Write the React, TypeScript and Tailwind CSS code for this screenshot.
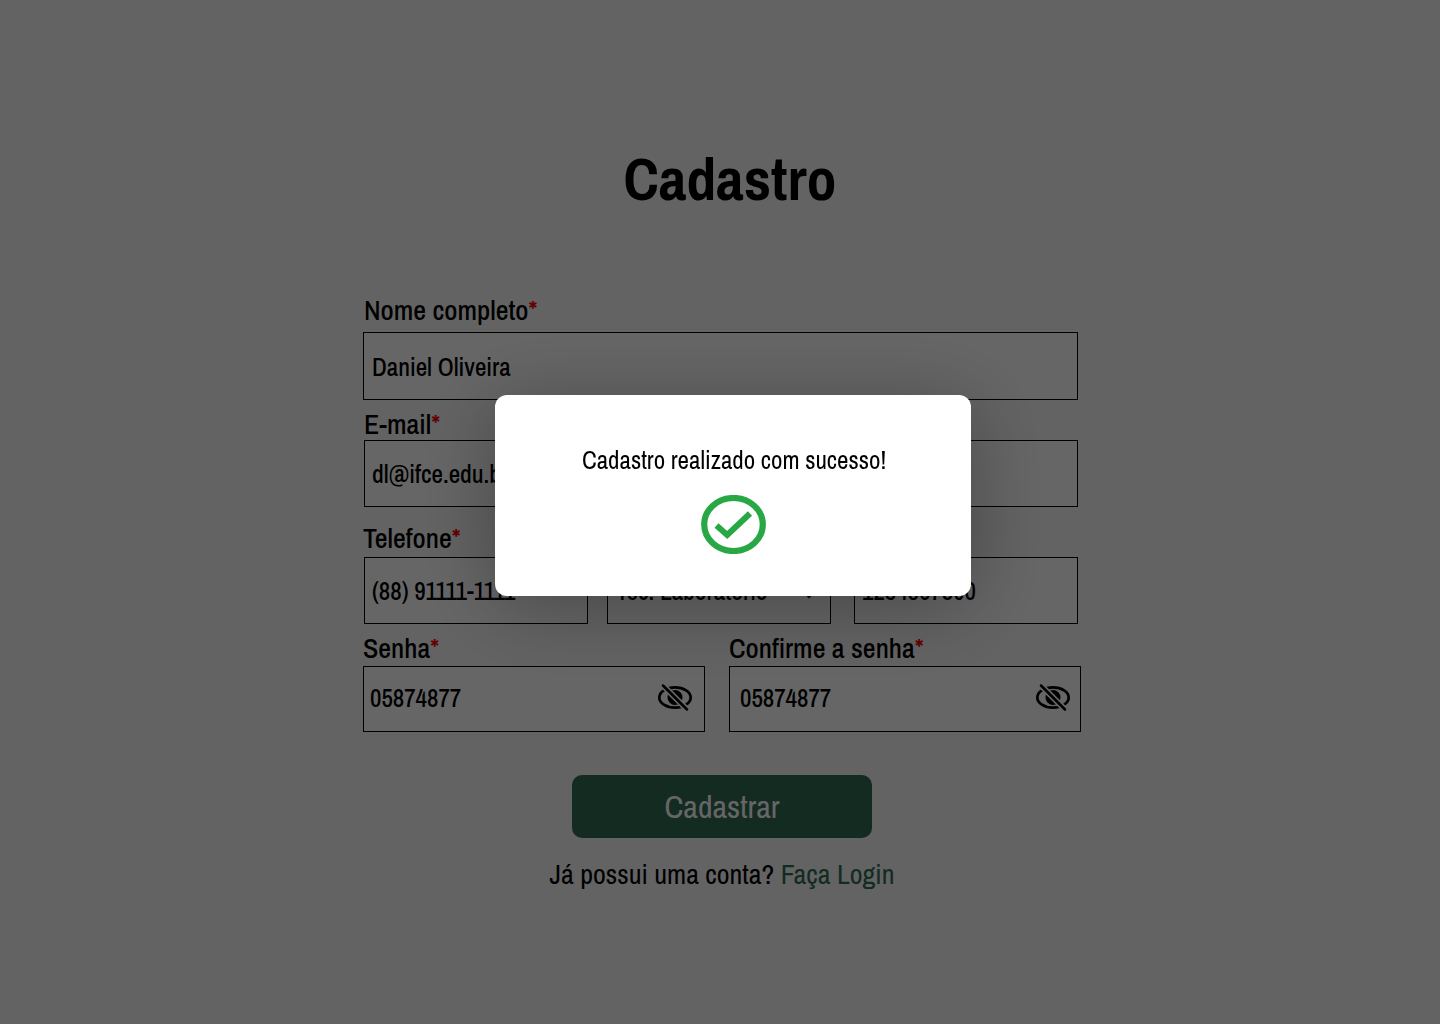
import { useId, useState, type ReactNode } from "react";

const inputBase =
  "w-full border border-black bg-white text-[25px] leading-8 font-medium text-black outline-none";

function Label({ htmlFor, children }: { htmlFor: string; children: ReactNode }) {
  return (
    <label htmlFor={htmlFor} className="block text-[28px] leading-8 font-medium whitespace-nowrap">
      {children}
      <span className="text-[#ff0000]">*</span>
    </label>
  );
}

function EyeOff() {
  const maskId = useId();
  return (
    <svg viewBox="0 0 36 30" className="h-[30px] w-9" fill="none" stroke="#000" aria-hidden="true">
      <mask id={maskId} maskUnits="userSpaceOnUse" x="0" y="0" width="36" height="30">
        <rect width="36" height="30" fill="#fff" stroke="none" />
        <path d="M2 -1.500L34 30.500" stroke="#000" strokeWidth="6" />
      </mask>
      <g mask={`url(#${maskId})`}>
        <ellipse cx="18" cy="14.500" rx="15.700" ry="10.200" strokeWidth="2.700" />
        <circle cx="18" cy="14.500" r="7.500" fill="#000" stroke="none" />
      </g>
      <path d="M6 2.500L30 26.500" strokeWidth="2.500" strokeLinecap="round" />
    </svg>
  );
}

function PasswordField({
  id,
  label,
  className,
  boxClassName,
}: {
  id: string;
  label: string;
  className: string;
  boxClassName: string;
}) {
  const [visible, setVisible] = useState(true);
  return (
    <div className={className}>
      <Label htmlFor={id}>{label}</Label>
      <div className={`mt-0.5 flex h-[66px] items-center border border-black bg-white pb-0.5 ${boxClassName}`}>
        <input
          id={id}
          type={visible ? "text" : "password"}
          defaultValue="05874877"
          className="min-w-0 flex-1 text-[25px] leading-8 font-medium outline-none"
        />
        <button type="button" aria-label="Mostrar ou ocultar senha" onClick={() => setVisible(!visible)}>
          <EyeOff />
        </button>
      </div>
    </div>
  );
}

export default function App() {
  return (
    <div className="min-h-screen bg-[#f7f7f7] font-['Archivo_Narrow','Liberation_Sans_Narrow','Liberation_Sans',sans-serif] text-black">
      <main className="mx-auto flex max-w-[722px] flex-col pt-[143px] pb-16 pl-1">
        <h1 className="pl-4 text-center text-[60px] leading-[72px] font-bold">Cadastro</h1>
        <form className="mt-[79px] flex flex-col" onSubmit={(e) => e.preventDefault()}>
          <div className="pr-[3px]">
            <div className="pl-px">
              <Label htmlFor="nome">Nome completo</Label>
            </div>
            <input id="nome" defaultValue="Daniel Oliveira" className={`${inputBase} mt-1.5 h-[68px] px-2 pt-0.5`} />
          </div>
          <div className="mt-2 pr-[3px] pl-px">
            <Label htmlFor="email">E-mail</Label>
            <input id="email" type="email" defaultValue="dl@ifce.edu.br" className={`${inputBase} h-[67px] px-[7px]`} />
          </div>
          <div className="mt-[15px] flex justify-between pr-[3px]">
            <div className="w-[225px]">
              <Label htmlFor="telefone">Telefone</Label>
              <div className="pl-px">
                <input
                  id="telefone"
                  type="tel"
                  defaultValue="(88) 91111-1111"
                  className={`${inputBase} mt-[3px] h-[67px] px-[7px]`}
                />
              </div>
            </div>
            <div className="mr-1 w-[224px]">
              <Label htmlFor="cargo">Cargo</Label>
              <div className="relative">
                <select id="cargo" className={`${inputBase} mt-[3px] h-[67px] appearance-none px-2`}>
                  <option>Tec. Laboratório</option>
                </select>
                <svg
                  viewBox="0 0 16 10"
                  className="pointer-events-none absolute top-[35px] right-3.5 h-2.5 w-4"
                  fill="none"
                  stroke="#000"
                  strokeWidth="2"
                  aria-hidden="true"
                >
                  <path d="M1 1L8 8L15 1" />
                </svg>
              </div>
            </div>
            <div className="w-[224px]">
              <Label htmlFor="siape">SIAPE</Label>
              <input id="siape" defaultValue="1234567890" className={`${inputBase} mt-[3px] h-[67px] px-[7px]`} />
            </div>
          </div>
          <div className="mt-2 flex gap-6">
            <PasswordField id="senha" label="Senha" className="w-[342px]" boxClassName="pl-1.5 pr-[11px]" />
            <PasswordField id="confirma" label="Confirme a senha" className="flex-1" boxClassName="pl-2.5 pr-[9px]" />
          </div>
          <button
            type="submit"
            className="mt-[43px] h-[63px] w-[300px] self-center rounded-[10px] bg-[#326b55] text-[32px] leading-10 text-white"
          >
            Cadastrar
          </button>
        </form>
        <p className="mt-5 text-center text-[28px] leading-8">
          Já possui uma conta?{" "}
          <a href="#login" className="text-[#326b55]">
            Faça Login
          </a>
        </p>
      </main>

      <div className="fixed inset-0 flex items-center justify-center bg-black/60 pb-[33px] pl-[26px]">
        <div
          role="dialog"
          aria-modal="true"
          aria-labelledby="mensagem"
          className="flex h-[201px] w-[476px] flex-col items-center rounded-xl bg-white pt-[49px] shadow-[0_10px_80px_rgba(0,0,0,0.3)]"
        >
          <p id="mensagem" className="pl-0.5 text-[25px] leading-8">
            Cadastro realizado com sucesso!
          </p>
          <svg viewBox="0 0 65 59" className="mt-[19px] h-[59px] w-[65px]" fill="none" stroke="#28a745" aria-hidden="true">
            <ellipse cx="32.500" cy="29.500" rx="29.300" ry="26.500" strokeWidth="6.200" />
            <path d="M15.500 30.500L26.200 40L49 18.500" strokeWidth="6" />
          </svg>
        </div>
      </div>
    </div>
  );
}
